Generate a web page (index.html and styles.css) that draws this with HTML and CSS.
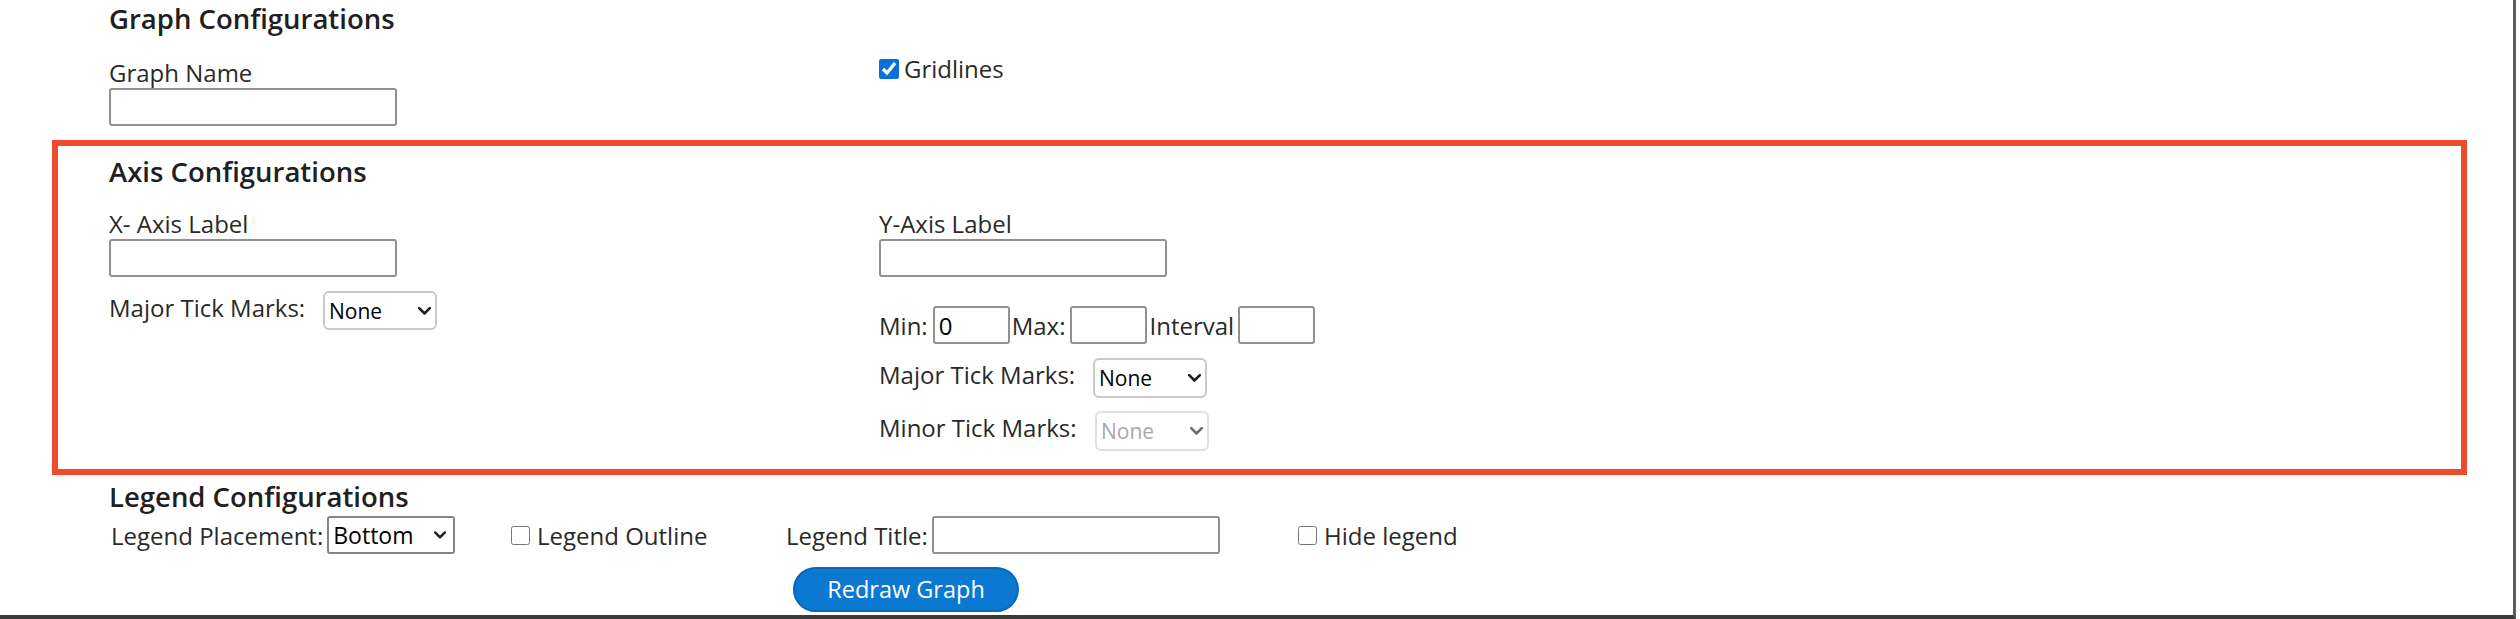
FILE: index.html
```html
<!DOCTYPE html>
<html lang="en">
<head>
<meta charset="utf-8">
<title>Graph Configurations</title>
<link rel="stylesheet" href="styles.css">
</head>
<body>
<div class="frame">
  <section class="graph-config">
    <h3 class="section-title">Graph Configurations</h3>
    <div class="two-col">
      <div class="col">
        <label class="field-label" for="graphName">Graph Name</label>
        <input class="text-in" id="graphName" type="text">
      </div>
      <div class="col">
        <label class="check gridlines"><input type="checkbox" class="cb" checked><span>Gridlines</span></label>
      </div>
    </div>
  </section>

  <section class="axis-config">
    <h3 class="section-title">Axis Configurations</h3>
    <div class="two-col axis-grid">
      <div class="col">
        <label class="field-label" for="xLabel">X- Axis Label</label>
        <input class="text-in" id="xLabel" type="text">
        <div class="tick-row first-tick">
          <span class="tick-label">Major Tick Marks:</span>
          <span class="sel sel-tick">
            <select class="select"><option>None</option></select>
            <svg class="chev" viewBox="0 0 13 8" width="13" height="8"><polyline points="1.2,1.2 6.5,6.5 11.8,1.2"/></svg>
          </span>
        </div>
      </div>
      <div class="col">
        <label class="field-label" for="yLabel">Y-Axis Label</label>
        <input class="text-in" id="yLabel" type="text">
        <div class="range-row">
          <span>Min:</span><input class="small-in" type="text" value="0">
          <span>Max:</span><input class="small-in" type="text">
          <span>Interval</span><input class="small-in last" type="text">
        </div>
        <div class="tick-row major-right">
          <span class="tick-label">Major Tick Marks:</span>
          <span class="sel sel-tick tall">
            <select class="select"><option>None</option></select>
            <svg class="chev" viewBox="0 0 13 8" width="13" height="8"><polyline points="1.2,1.2 6.5,6.5 11.8,1.2"/></svg>
          </span>
        </div>
        <div class="tick-row minor-right">
          <span class="tick-label">Minor Tick Marks:</span>
          <span class="sel sel-tick tall disabled">
            <select class="select" disabled><option>None</option></select>
            <svg class="chev" viewBox="0 0 13 8" width="13" height="8"><polyline points="1.2,1.2 6.5,6.5 11.8,1.2"/></svg>
          </span>
        </div>
      </div>
    </div>
  </section>

  <section class="legend-config">
    <h3 class="section-title">Legend Configurations</h3>
    <div class="legend-grid">
      <div class="cell">
        <span class="legend-label">Legend Placement:</span>
        <span class="sel sel-legend">
          <select class="select"><option>Bottom</option></select>
          <svg class="chev small" viewBox="0 0 13 8" width="12" height="8"><polyline points="1.2,1.2 6.5,6.5 11.8,1.2"/></svg>
        </span>
      </div>
      <div class="cell">
        <label class="check"><input type="checkbox" class="cb cb-small"><span>Legend Outline</span></label>
      </div>
      <div class="cell">
        <span class="legend-label">Legend Title:</span>
        <input class="text-in inline" type="text">
      </div>
      <div class="cell">
        <label class="check"><input type="checkbox" class="cb cb-small"><span>Hide legend</span></label>
      </div>
      <div class="cell button-cell">
        <button class="redraw" type="button">Redraw Graph</button>
      </div>
    </div>
  </section>
</div>
</body>
</html>
```

FILE: styles.css
```css
* {
  box-sizing: border-box;
}

html,
body {
  margin: 0;
  padding: 0;
  background: #ffffff;
}

body {
  font-family: "Open Sans", "Noto Sans", "DejaVu Sans", sans-serif;
  font-size: 24px;
  color: #2a2a2a;
}

.frame {
  width: 2516px;
  height: 619px;
  border-right: 3px solid #5c5c5c;
  border-bottom: 4px solid #3a3a3a;
  overflow: hidden;
}

.section-title {
  margin: 0;
  font-size: 27.5px;
  font-weight: 600;
  line-height: 37px;
  color: #202020;
}

/* ---------- Graph configurations ---------- */
.graph-config {
  padding-left: 109px;
}

.two-col {
  display: grid;
  grid-template-columns: 770px auto;
  margin-top: 20px;
}

.col {
  display: flex;
  flex-direction: column;
  align-items: flex-start;
}

.field-label {
  display: block;
  line-height: 31px;
}

.text-in {
  display: block;
  width: 288px;
  height: 38px;
  margin: 0;
  padding: 0 6px;
  border: 2px solid #919191;
  border-radius: 3px;
  background: #fff;
  font: inherit;
  color: #000;
}

.check {
  display: flex;
  align-items: center;
  line-height: 31px;
}

.gridlines {
  margin-top: -4px;
}

.gridlines .cb {
  margin-right: 5px;
}

.cb {
  width: 20px;
  height: 20px;
  margin: 0 7px 0 0;
  accent-color: #0b6fd9;
}

.cb-small {
  width: 19px;
  height: 19px;
}

/* ---------- Axis configurations ---------- */
.axis-config {
  margin: 14px 0 0 52px;
  width: 2415px;
  border: 6px solid #f04b2b;
  padding: 7px 0 18px 51px;
}

.axis-grid {
  margin-top: 18px;
}

.tick-row {
  display: flex;
  align-items: flex-start;
  line-height: 31px;
}

.first-tick {
  margin-top: 14px;
}

.major-right {
  margin-top: 14px;
}

.minor-right {
  margin-top: 13px;
}

.tick-label {
  width: 214px;
  padding-top: 1px;
}

.minor-right .tick-label {
  width: 216px;
}

.sel {
  position: relative;
  display: inline-flex;
}

.select {
  appearance: none;
  -webkit-appearance: none;
  margin: 0;
  padding: 0 0 0 4px;
  background: #fff;
  font-family: inherit;
  color: #000;
}

.sel-tick .select {
  width: 114px;
  height: 39px;
  font-size: 21px;
  border: 2px solid #c9c9c9;
  border-radius: 6px;
}

.sel-tick.tall .select {
  height: 40px;
}

.sel.disabled .select {
  color: #a8a8a8;
  border-color: #e0e0e0;
  opacity: 1;
}

.chev {
  position: absolute;
  right: 6px;
  top: 50%;
  margin-top: -4px;
  fill: none;
  stroke: #1e1e1e;
  stroke-width: 2.6;
  stroke-linecap: round;
  stroke-linejoin: round;
  pointer-events: none;
}

.sel.disabled .chev {
  stroke: #6e6e6e;
}

.range-row {
  display: flex;
  align-items: center;
  margin-top: 29px;
  line-height: 31px;
}

.small-in {
  width: 77px;
  height: 38px;
  margin: 0 2px 0 5px;
  padding: 0 4px;
  border: 2px solid #919191;
  border-radius: 3px;
  font: inherit;
  color: #000;
  background: #fff;
}

.small-in.last {
  margin-left: 4px;
}

/* ---------- Legend configurations ---------- */
.legend-config {
  padding-left: 109px;
  margin-top: 3px;
}

.legend-grid {
  display: grid;
  grid-template-columns: 402px 275px 512px auto;
  row-gap: 13px;
  margin-top: 1px;
}

.cell {
  display: flex;
  align-items: center;
  height: 38px;
  line-height: 31px;
}

.cell:first-child {
  padding-left: 2px;
}

.legend-label {
  margin-right: 4px;
}

.sel-legend .select {
  width: 128px;
  height: 38px;
  font-size: 23px;
  border: 2px solid #858585;
  border-radius: 3px;
}

.chev.small {
  right: 9px;
}

.text-in.inline {
  display: inline-block;
}

.button-cell {
  grid-column: 3;
  height: 45px;
  padding-left: 7px;
}

.redraw {
  width: 226px;
  height: 45px;
  margin: 0;
  border: 2px solid #0866bb;
  border-radius: 23px;
  background: #0b78d1;
  color: #ffffff;
  font-family: inherit;
  font-size: 23.5px;
  line-height: 1;
  padding: 0;
}
```
